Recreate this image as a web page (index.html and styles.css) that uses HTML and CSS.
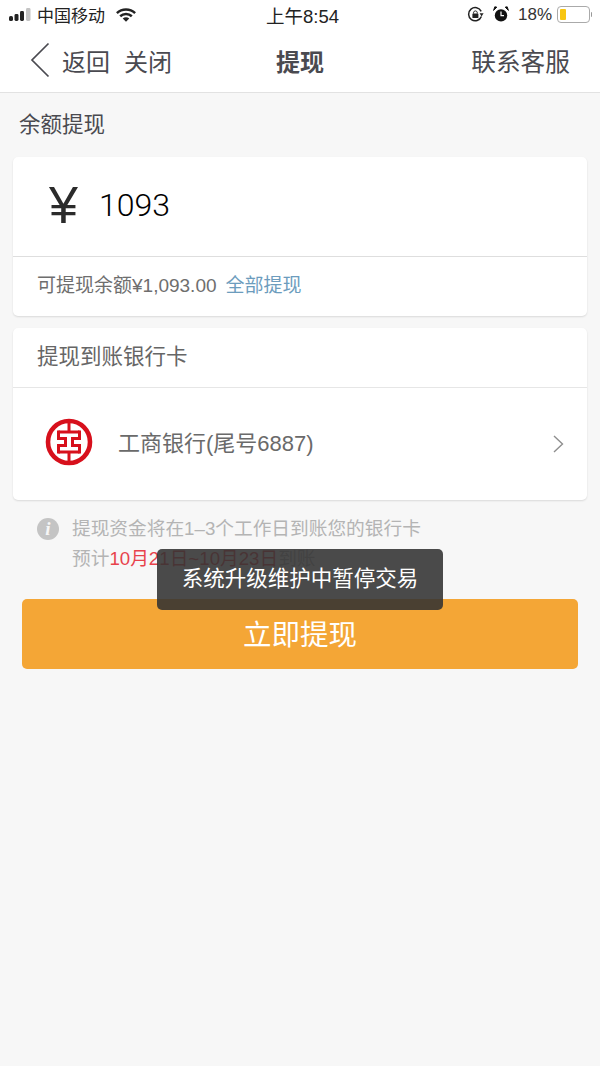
FILE: index.html
```html
<!DOCTYPE html>
<html>
	<head>
		<meta charset="utf-8"/>
		<title>提现</title>
		<link rel="stylesheet" href="styles.css">
	</head>
	<body>
		<div class="statusbar">
			<div class="status-left">
				<svg class="signal" width="22" height="13" viewBox="0 0 22 13">
					<rect x="0" y="8" width="4" height="5" rx="1.6" fill="#222"/>
					<rect x="5.5" y="6" width="4" height="7" rx="1.4" fill="#222"/>
					<rect x="11" y="3" width="4" height="10" rx="1.4" fill="#222"/>
					<rect x="17" y="0" width="4.5" height="13" rx="1.4" fill="#c4c4c4"/>
				</svg>
				<span class="carrier">中国移动</span>
				<svg class="wifi" width="20" height="14" viewBox="0 0 22 15">
					<path d="M1 5.4C6.6 .2 15.4 .2 21 5.4" fill="none" stroke="#222" stroke-width="2.8"/>
					<path d="M4.6 8.8C8.2 5.6 13.8 5.6 17.4 8.8" fill="none" stroke="#222" stroke-width="2.8"/>
					<path d="M7.4 11.4C9.6 9.6 12.4 9.6 14.6 11.4L11 15Z" fill="#222"/>
				</svg>
			</div>
			<div class="status-time">上午8:54</div>
			<div class="status-right">
				<svg width="17" height="17" viewBox="0 0 17 17">
					<path d="M14.4 10.6A6.6 6.6 0 1 1 14.2 5.4" fill="none" stroke="#222" stroke-width="1.5"/>
					<path d="M16.6 7.2L12.6 7.2L14.6 10.4Z" fill="#222"/>
					<rect x="5.4" y="7.4" width="6" height="4.6" rx=".6" fill="#222"/>
					<path d="M6.6 7.6V6.2A1.9 1.9 0 0 1 10.2 6.2V7.6" fill="none" stroke="#222" stroke-width="1"/>
				</svg>
				<svg class="alarm" width="16" height="17" viewBox="0 0 16 17">
					<circle cx="8" cy="9.4" r="6.2" fill="#111"/>
					<path d="M8 5.6V9.6H11" fill="none" stroke="#fff" stroke-width="1.2"/>
					<path d="M.6 4.4L3.8 1.2L1.8 .8Z M15.4 4.4L12.2 1.2L14.2 .8Z" fill="#111" stroke="#111"/>
				</svg>
				<span class="percent">18%</span>
				<div class="battery"><div class="battery-level"></div></div>
				<div class="battery-tip"></div>
			</div>
		</div>
		<div class="navbar">
			<div class="nav-left">
				<svg class="back" width="20" height="36" viewBox="0 0 20 36">
					<path d="M18.5 1.5L2 18L18.5 34.5" fill="none" stroke="#4a4a50" stroke-width="1.7"/>
				</svg>
				<span>返回</span>
				<span class="nav-close">关闭</span>
			</div>
			<div class="nav-title">提现</div>
			<div class="nav-right">联系客服</div>
		</div>
		<div class="section-title">余额提现</div>
		<div class="card balance-card">
			<div class="amount-row">
				<span class="yen">¥</span>
				<span class="amount">1093</span>
			</div>
			<div class="balance-row">
				<span>可提现余额¥1,093.00</span>
				<a class="withdraw-all">全部提现</a>
			</div>
		</div>
		<div class="card bank-card">
			<div class="bank-header">提现到账银行卡</div>
			<div class="bank-row">
				<svg class="bank-logo" width="48" height="48" viewBox="0 0 48 48">
					<circle cx="24" cy="24" r="21" fill="none" stroke="#d7101c" stroke-width="4.6"/>
					<path d="M13.5 14H34.5M13.5 34H34.5" fill="none" stroke="#d7101c" stroke-width="3"/>
					<path d="M13.5 12.5V20.5H20.5V27.5H13.5V35.5M34.5 12.5V20.5H27.5V27.5H34.5V35.5" fill="none" stroke="#d7101c" stroke-width="3"/>
					<path d="M24 3V14M24 34V45" fill="none" stroke="#d7101c" stroke-width="3"/>
				</svg>
				<span class="bank-name">工商银行(尾号6887)</span>
				<svg class="chevron" width="11" height="18" viewBox="0 0 11 18">
					<path d="M1 1L9.5 9L1 17" fill="none" stroke="#8e8e8e" stroke-width="1.4"/>
				</svg>
			</div>
		</div>
		<div class="note">
			<div class="info-icon">i</div>
			<div class="note-text">
				<div>提现资金将在1–3个工作日到账您的银行卡</div>
				<div>预计<span class="note-date">10月21日~10月23日</span>到账</div>
			</div>
		</div>
		<div class="submit">立即提现</div>
		<div class="toast">系统升级维护中暂停交易</div>
	</body>
</html>
```

FILE: styles.css
```css
html, body {
	margin: 0;
	height: 100%;
}
body {
	background: #f7f7f7;
	color: #4a4a50;
	font-family: "Liberation Sans", "Noto Sans CJK SC", sans-serif;
	height: 1066px;
	overflow: hidden;
	position: relative;
}
.statusbar {
	align-items: center;
	background: #fff;
	box-sizing: border-box;
	color: #222;
	display: flex;
	font-size: 17px;
	height: 32px;
	justify-content: space-between;
	padding: 0 8px 3px 9px;
	position: relative;
}
.status-left {
	align-items: center;
	display: flex;
}
.carrier {
	margin-left: 6px;
}
.wifi {
	margin-left: 11px;
}
.status-time {
	font-size: 18.5px;
	left: 5px;
	position: absolute;
	right: 0;
	text-align: center;
}
.status-right {
	align-items: center;
	display: flex;
	position: relative;
}
.alarm {
	margin-left: 9px;
}
.percent {
	color: #333;
	font-size: 17px;
	margin-left: 9px;
}
.battery {
	border: 1px solid #aaa;
	border-radius: 4px;
	box-sizing: border-box;
	height: 17px;
	margin-left: 5px;
	padding: 2px;
	width: 33px;
}
.battery-level {
	background: #f8c612;
	border-radius: 1px;
	height: 100%;
	width: 6px;
}
.battery-tip {
	background: #999;
	border-radius: 0 2px 2px 0;
	height: 5px;
	margin-left: 1px;
	width: 1px;
}
.navbar {
	align-items: center;
	background: #fff;
	border-bottom: 1px solid #e2e2e2;
	box-sizing: content-box;
	display: flex;
	font-size: 24px;
	height: 56px;
	justify-content: space-between;
	padding: 0 30px 4px;
	position: relative;
}
.nav-left {
	align-items: center;
	display: flex;
	gap: 12px;
}
.nav-close {
	margin-left: 2px;
}
.nav-title {
	font-weight: bold;
	left: 0;
	position: absolute;
	right: 0;
	text-align: center;
}
.nav-right {
	font-size: 24.7px;
	position: relative;
}
.section-title {
	font-size: 21.5px;
	height: 64px;
	line-height: 64px;
	padding-left: 19px;
}
.card {
	background: #fff;
	border-radius: 5px;
	box-shadow: 0 1px 2px rgba(0, 0, 0, .12);
	margin: 0 13px;
}
.balance-card {
	height: 159px;
}
.amount-row {
	align-items: center;
	border-bottom: 1px solid #dedede;
	box-sizing: border-box;
	display: flex;
	height: 100px;
	padding: 0 0 4px 36px;
}
.yen {
	color: #2b2b2b;
	font-size: 52px;
	width: 50px;
}
.amount {
	color: #000;
	font-family: Roboto, "Liberation Sans", sans-serif;
	font-size: 32px;
	font-weight: 300;
}
.balance-row {
	align-items: center;
	box-sizing: border-box;
	color: #6e6e6e;
	display: flex;
	font-size: 19px;
	gap: 9px;
	height: 59px;
	padding: 0 0 6px 24px;
}
.withdraw-all {
	color: #6c9cbd;
}
.bank-card {
	height: 172px;
	margin-top: 12px;
}
.bank-header {
	border-bottom: 1px solid #e6e6e6;
	color: #666;
	font-size: 21.5px;
	height: 59px;
	line-height: 58px;
	padding-left: 24px;
}
.bank-row {
	align-items: center;
	box-sizing: border-box;
	display: flex;
	height: 112px;
	padding: 0 23px 4px 32px;
}
.bank-logo {
	flex: none;
}
.bank-name {
	color: #6a6a6a;
	flex: 1;
	font-size: 22px;
	margin: 0 0 2px 25px;
}
.chevron {
	margin-top: 4px;
}
.note {
	color: #b4b4b4;
	display: flex;
	font-size: 18.7px;
	line-height: 30px;
	padding: 14px 0 0 37px;
}
.info-icon {
	background: #c4c4c4;
	border-radius: 50%;
	color: #f6f6f6;
	flex: none;
	font-family: "Liberation Serif", serif;
	font-size: 19px;
	font-style: italic;
	font-weight: bold;
	height: 22px;
	line-height: 22px;
	margin-top: 4px;
	text-align: center;
	width: 22px;
}
.note-text {
	margin-left: 13px;
}
.note-date {
	color: #e8434c;
}
.submit {
	background: #f4a636;
	border-radius: 5px;
	color: #fff;
	font-size: 28.5px;
	height: 70px;
	line-height: 73px;
	margin: 25px 22px 0;
	text-align: center;
}
.toast {
	background: rgba(50, 50, 50, .88);
	border-radius: 5px;
	box-sizing: border-box;
	color: #fff;
	font-size: 21.5px;
	height: 61px;
	left: 157px;
	line-height: 60px;
	position: absolute;
	text-align: center;
	top: 549px;
	width: 286px;
}
```
